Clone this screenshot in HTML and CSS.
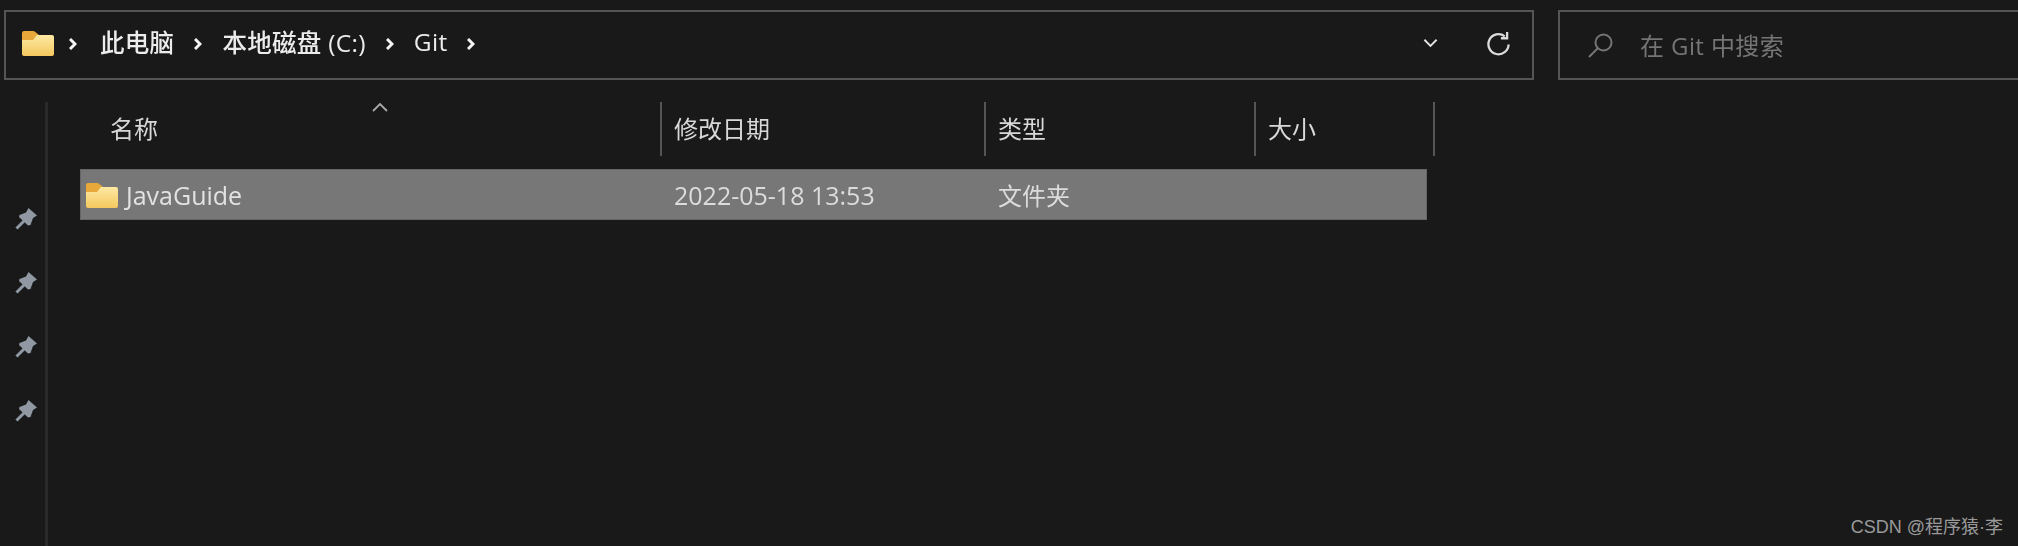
FILE: index.html
```html
<!DOCTYPE html>
<html lang="zh-CN">
<head>
    <meta charset="UTF-8">
    <title>Git</title>
    <link rel="stylesheet" href="styles.css">
</head>
<body>
    <svg width="0" height="0" class="defs">
        <defs>
            <linearGradient id="folderFill" x1="0" y1="0" x2="0" y2="1">
                <stop offset="0" stop-color="#fde9a4"/>
                <stop offset="1" stop-color="#f5c85e"/>
            </linearGradient>
            <symbol id="folder" viewBox="0 0 32 26">
                <path d="M0 3a2 2 0 0 1 2-2h9a3 3 0 0 1 2 .8L17 5v6H0z" fill="#e8a93a"/>
                <path d="M0 10h11l4-5h15a2 2 0 0 1 2 2v17a2 2 0 0 1-2 2H2a2 2 0 0 1-2-2z" fill="url(#folderFill)"/>
            </symbol>
            <symbol id="chevron" viewBox="0 0 8 12">
                <path d="M1 1 6 6l-5 5" fill="none" stroke="currentColor" stroke-width="3"/>
            </symbol>
            <symbol id="pin" viewBox="0 0 22 22">
                <path d="M13.500 0 22 7.500 18 10 15.500 17 13 17.500 4 9 4.500 7 11 4.500z" fill="currentColor"/>
                <path d="M9 13 1.500 20.500" stroke="currentColor" stroke-width="3" fill="none"/>
            </symbol>
        </defs>
    </svg>

    <div class="toolbar">
        <div class="address-bar">
            <svg class="folder-top"><use href="#folder"/></svg>
            <svg class="crumb-sep first"><use href="#chevron"/></svg>
            <span class="crumb">此电脑</span>
            <svg class="crumb-sep"><use href="#chevron"/></svg>
            <span class="crumb">本地磁盘 (C:)</span>
            <svg class="crumb-sep"><use href="#chevron"/></svg>
            <span class="crumb">Git</span>
            <svg class="crumb-sep"><use href="#chevron"/></svg>
            <svg class="history" viewBox="0 0 16 10"><path d="M1.500 1.500 8 8l6.500-6.500" fill="none" stroke="currentColor" stroke-width="2"/></svg>
            <svg class="refresh" viewBox="0 0 24 26">
                <path d="M18.500 5.500A10.500 10.500 0 1 0 22.500 14" fill="none" stroke="currentColor" stroke-width="2.400"/>
                <path d="M21 1v6.500h-6.500" fill="none" stroke="currentColor" stroke-width="2.400"/>
            </svg>
        </div>
        <div class="search-box">
            <svg class="search-icon" viewBox="0 0 25 25">
                <circle cx="15.500" cy="9.500" r="8" fill="none" stroke="currentColor" stroke-width="2"/>
                <path d="M10 15 1 24" stroke="currentColor" stroke-width="2"/>
            </svg>
            <span>在 Git 中搜索</span>
        </div>
    </div>

    <div class="content">
        <div class="quick-access">
            <svg class="pin"><use href="#pin"/></svg>
            <svg class="pin"><use href="#pin"/></svg>
            <svg class="pin"><use href="#pin"/></svg>
            <svg class="pin"><use href="#pin"/></svg>
        </div>
        <div class="files">
            <div class="file-header">
                <div class="col-name">名称
                    <svg class="sort-caret" viewBox="0 0 16 10"><path d="M1 9 8 2l7 7" fill="none" stroke="currentColor" stroke-width="1.800"/></svg>
                </div>
                <div class="col">修改日期</div>
                <div class="col">类型</div>
                <div class="col col-last">大小</div>
            </div>
            <div class="file-row">
                <div class="row-name">
                    <svg class="folder-row"><use href="#folder"/></svg>
                    <span class="latin">JavaGuide</span>
                </div>
                <div class="row-cell latin">2022-05-18 13:53</div>
                <div class="row-cell">文件夹</div>
            </div>
        </div>
    </div>

    <div class="watermark">CSDN @程序猿·李</div>
</body>
</html>
```

FILE: styles.css
```css
* {
    margin: 0;
    padding: 0;
    box-sizing: border-box;
}

html, body {
    height: 546px;
    overflow: hidden;
}

body {
    position: relative;
    width: 2018px;
    background-color: #191919;
    color: #e6e6e6;
    font-family: 'Open Sans', 'Noto Sans CJK SC', sans-serif;
    font-size: 24px;
}

.defs {
    display: block;
    height: 0;
}

/* the reference is an upscaled screenshot, everything is a bit soft */
.toolbar, .content {
    filter: blur(0.5px);
}

.toolbar {
    display: flex;
    gap: 24px;
    padding: 10px 0 0 4px;
    width: 2100px;
}

.address-bar {
    display: flex;
    align-items: center;
    width: 1530px;
    height: 70px;
    padding: 0 22px 4px 16px;
    border: 2px solid #555;
}

.folder-top {
    width: 32px;
    height: 26px;
}

.crumb-sep {
    width: 8px;
    height: 12px;
    margin: 2px 20px 0 20px;
    color: #f4f4f4;
}

.crumb-sep.first {
    margin-left: 15px;
    margin-right: 23px;
}

.crumb {
    color: #ececec;
    font-size: 24.5px;
    font-weight: 500;
    letter-spacing: 0.3px;
    white-space: nowrap;
    margin-bottom: 3px;
}

.history {
    width: 15px;
    height: 10px;
    margin-left: auto;
    margin-right: 49px;
    color: #e4e4e4;
}

.refresh {
    width: 23px;
    height: 25px;
    color: #dcdcdc;
}

.search-box {
    display: flex;
    align-items: center;
    gap: 27px;
    width: 520px;
    height: 70px;
    padding-left: 28px;
    border: 2px solid #555;
    color: #757575;
}

.search-box span {
    margin-bottom: 2px;
    letter-spacing: 0.4px;
}

.search-icon {
    width: 25px;
    height: 25px;
}

.content {
    display: flex;
    margin-top: 22px;
}

.quick-access {
    display: flex;
    flex-direction: column;
    gap: 42px;
    width: 48px;
    height: 444px;
    padding: 106px 0 0 15px;
    border-right: 3px solid #2a2a2a;
    color: #8f98a3;
}

.pin {
    width: 22px;
    height: 22px;
}

.files {
    flex: none;
    width: 1389px;
}

.file-header {
    display: grid;
    grid-template-columns: 612px 324px 270px 181px;
    height: 53px;
    color: #d8d8d8;
}

.col-name {
    position: relative;
    padding-left: 62px;
    line-height: 54px;
}

.sort-caret {
    position: absolute;
    left: 324px;
    top: 0;
    width: 16px;
    height: 10px;
    color: #aaa;
}

.col {
    padding-left: 12px;
    line-height: 54px;
    border-left: 2px solid #555;
}

.col-last {
    border-right: 2px solid #555;
}

.file-row {
    display: grid;
    grid-template-columns: 580px 324px 1fr;
    align-items: center;
    width: 1347px;
    height: 51px;
    margin: 14px 0 0 32px;
    background-color: #777;
    border: 1px solid #666;
    color: #e2e2e2;
}

.row-name {
    display: flex;
    align-items: center;
    gap: 8px;
    padding-left: 5px;
}

.folder-row {
    width: 32px;
    height: 26px;
}

.latin {
    font-size: 25px;
}

.row-cell {
    padding-left: 13px;
    color: #dcdcdc;
}

.watermark {
    position: absolute;
    right: 15px;
    bottom: 8px;
    color: #9a9a9a;
    font-family: 'Liberation Sans', 'Noto Sans CJK SC', sans-serif;
    font-size: 18px;
}
```
